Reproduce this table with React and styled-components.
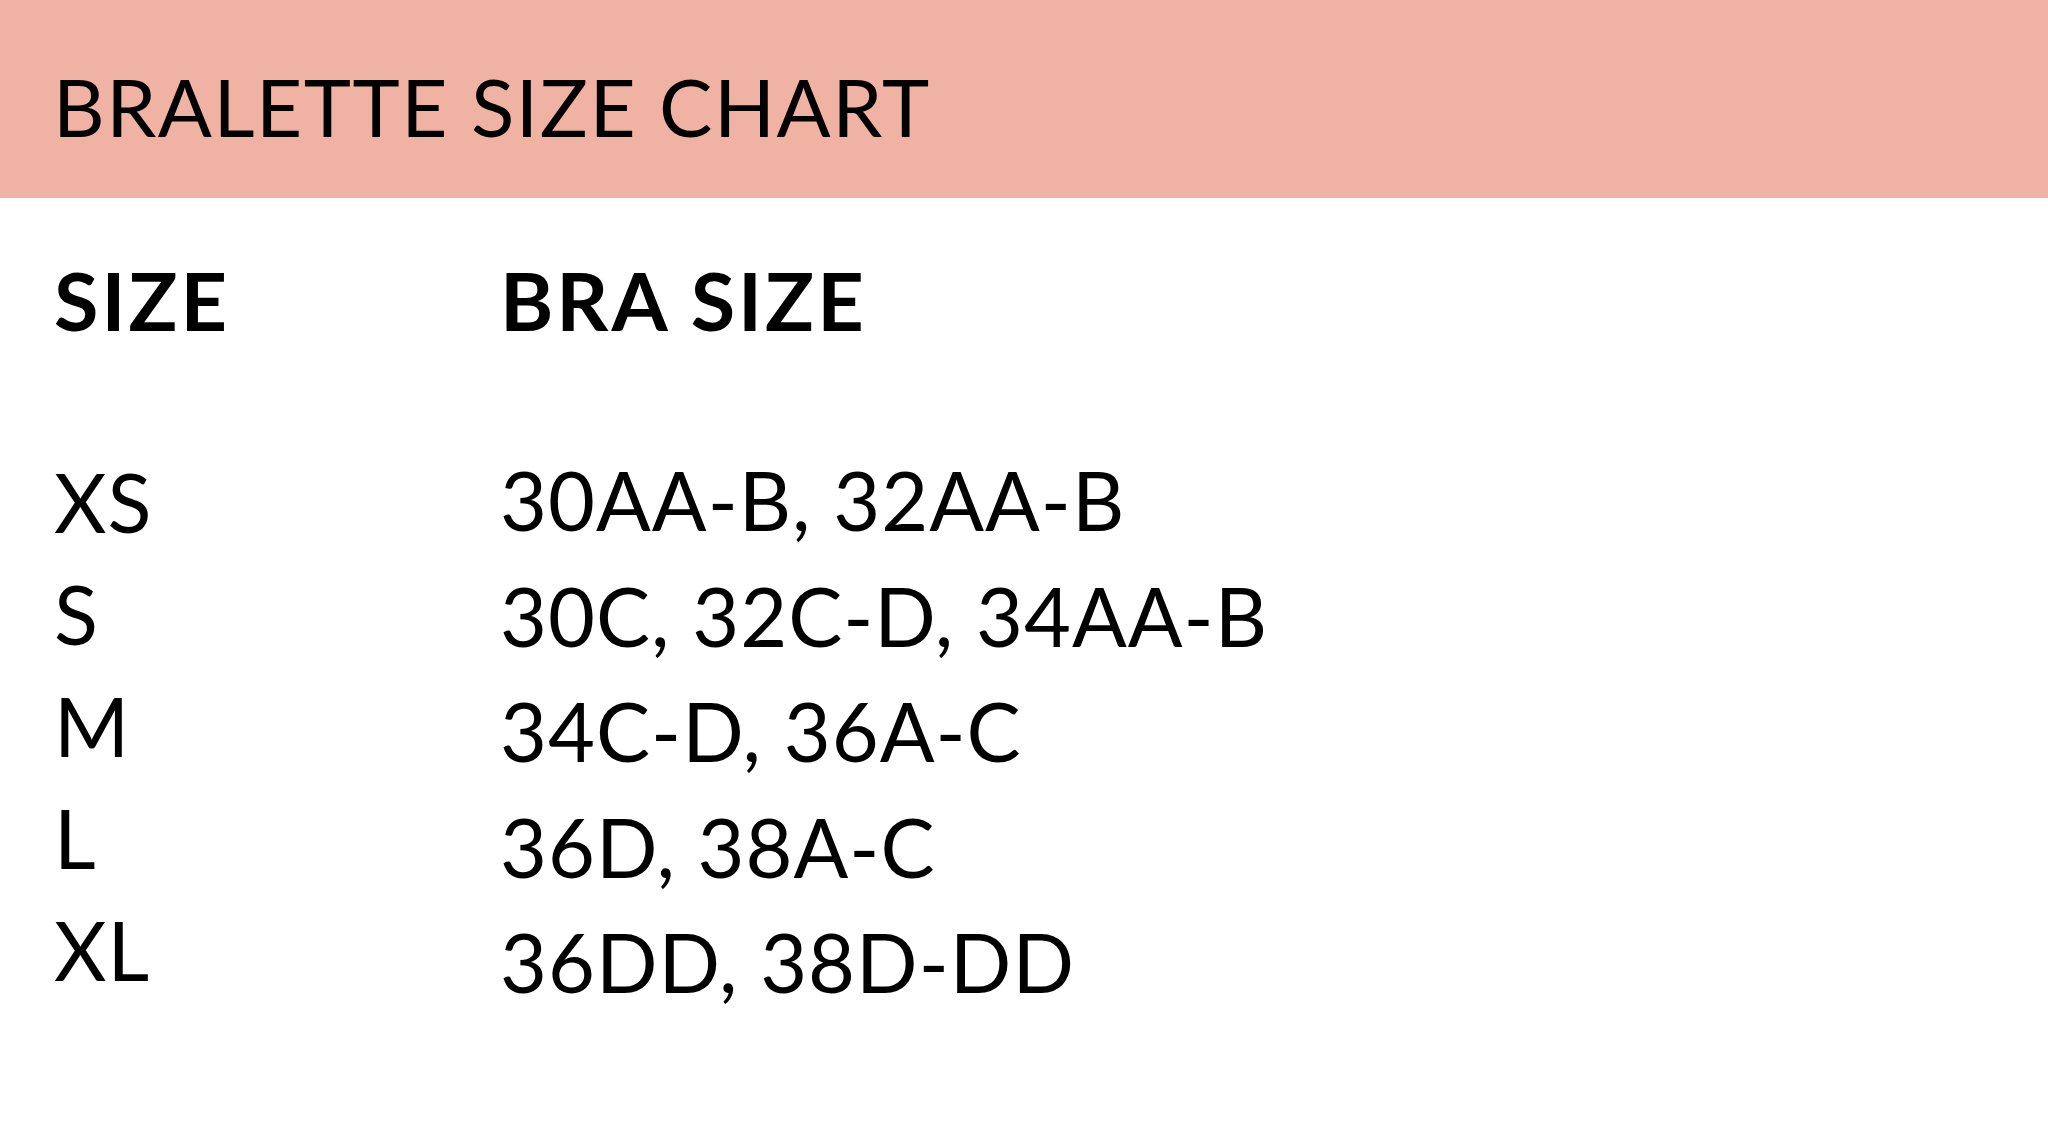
import React from 'react'
import styled, { createGlobalStyle } from 'styled-components'

const GlobalStyle = createGlobalStyle`
    html, body {
        margin: 0;
        padding: 0;
        background: #ffffff;
    }
    body {
        font-family: 'Lato', 'Open Sans', sans-serif;
        color: #000000;
    }
`;

const Page = styled.div`
    width: 2048px;
    min-height: 1126px;
    background: #ffffff;
`;

const Banner = styled.header`
    box-sizing: border-box;
    height: 198px;
    padding: 58px 0 0 53px;
    background: #f0b2a3;
`;

const Title = styled.h1`
    margin: 0;
    font-family: 'Lato', sans-serif;
    font-weight: 400;
    font-size: 80px;
    line-height: 96px;
    letter-spacing: 1.5px;
`;

const Table = styled.section`
    display: flex;
    flex-flow: row nowrap;
    padding: 53px 0 0 54px;
`;

const Column = styled.div`
    flex: 0 0 ${props => props.width};
    display: flex;
    flex-flow: column nowrap;
`;

const Heading = styled.h2`
    margin: 0;
    font-family: 'Lato', sans-serif;
    font-weight: 700;
    font-size: 81px;
    line-height: 97px;
    letter-spacing: 3px;
`;

const List = styled.ul`
    list-style: none;
    margin: ${props => props.offset} 0 0;
    padding: 0;
`;

const Cell = styled.li`
    font-family: 'Lato', sans-serif;
    font-weight: 400;
    font-size: 81px;
    line-height: ${props => props.rowHeight};
    letter-spacing: 1px;
    white-space: nowrap;
`;

const rows = [
    { size: 'XS', bra: '30AA-B, 32AA-B' },
    { size: 'S', bra: '30C, 32C-D, 34AA-B' },
    { size: 'M', bra: '34C-D, 36A-C' },
    { size: 'L', bra: '36D, 38A-C' },
    { size: 'XL', bra: '36DD, 38D-DD' },
];

export default function App() {
    return (
        <Page>
            <GlobalStyle />
            <Banner>
                <Title>BRALETTE SIZE CHART</Title>
            </Banner>
            <Table>
                <Column width="446px">
                    <Heading>SIZE</Heading>
                    <List offset="98px">
                        {rows.map(r => (
                            <Cell key={r.size} rowHeight="112px">{r.size}</Cell>
                        ))}
                    </List>
                </Column>
                <Column width="auto">
                    <Heading>BRA SIZE</Heading>
                    <List offset="94px">
                        {rows.map(r => (
                            <Cell key={r.size} rowHeight="115.5px">{r.bra}</Cell>
                        ))}
                    </List>
                </Column>
            </Table>
        </Page>
    );
}
